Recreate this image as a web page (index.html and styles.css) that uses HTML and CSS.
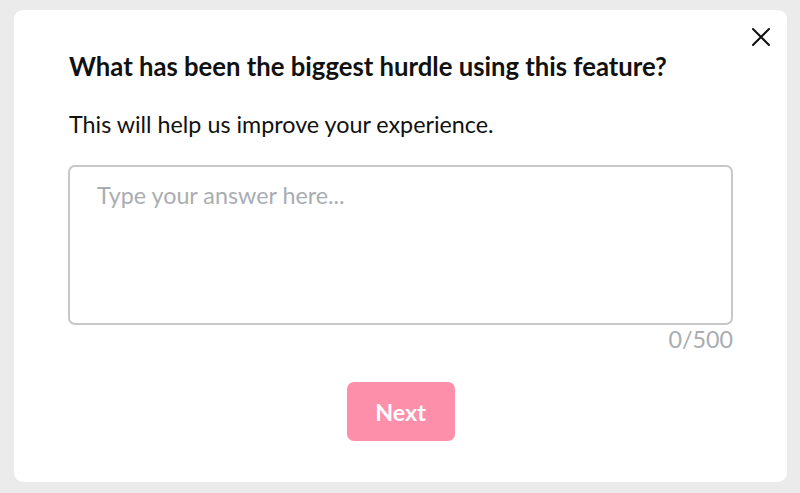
FILE: index.html
```html
<!DOCTYPE html>
<html>
<head>
<meta charset="utf-8">
<link rel="stylesheet" href="styles.css">
</head>
<body>
<div class="card">
  <button class="close" aria-label="Close">
    <svg width="20" height="20" viewBox="0 0 20 20"><path d="M2 2L18 18M18 2L2 18" stroke="#111" stroke-width="2" stroke-linecap="round"/></svg>
  </button>
  <h1 class="title">What has been the biggest hurdle using this feature?</h1>
  <p class="subtitle">This will help us improve your experience.</p>
  <textarea class="answer" placeholder="Type your answer here..."></textarea>
  <div class="counter">0/500</div>
  <div class="actions"><button class="next">Next</button></div>
</div>
</body>
</html>
```
FILE: styles.css
```css
html, body { margin: 0; height: 100%; }
body {
  background: #ebebeb;
  padding: 10px 13px 11px 14px;
  box-sizing: border-box;
  font-family: Lato, "Noto Sans", sans-serif;
}
.card {
  position: relative;
  background: #fff;
  border-radius: 9px;
  height: 100%;
  box-sizing: border-box;
  padding: 41px 54px 0 54px;
  display: flex;
  flex-direction: column;
}
.close {
  position: absolute;
  top: 17px;
  right: 16px;
  background: none;
  border: 0;
  padding: 0;
  width: 20px;
  height: 20px;
  cursor: pointer;
}
.close svg { display: block; }
.title {
  margin: 0 0 0 1px;
  font-size: 25.7px;
  font-weight: 700;
  color: #111;
  line-height: 31px;
}
.subtitle {
  margin: 28px 0 0 1px;
  font-size: 23.3px;
  color: #111;
  line-height: 28px;
}
.answer {
  margin: 27px 0 0 0;
  height: 160px;
  box-sizing: border-box;
  border: 2px solid #c6c7c9;
  border-radius: 7px;
  padding: 14px 27px;
  font-family: Lato, "Noto Sans", sans-serif;
  font-size: 23.3px;
  resize: none;
  outline: none;
}
.answer::placeholder { color: #a9adb1; }
.counter {
  text-align: right;
  font-size: 23.3px;
  color: #a9adb1;
  margin-top: 0;
  line-height: 28px;
}
.actions {
  display: flex;
  justify-content: center;
  margin-top: 29px;
}
.next {
  width: 108px;
  height: 59px;
  border: 0;
  border-radius: 7px;
  background: #fd8fab;
  color: #fff;
  font-family: Lato, "Noto Sans", sans-serif;
  font-size: 23.3px;
  font-weight: 700;
  padding: 0;
}
```
